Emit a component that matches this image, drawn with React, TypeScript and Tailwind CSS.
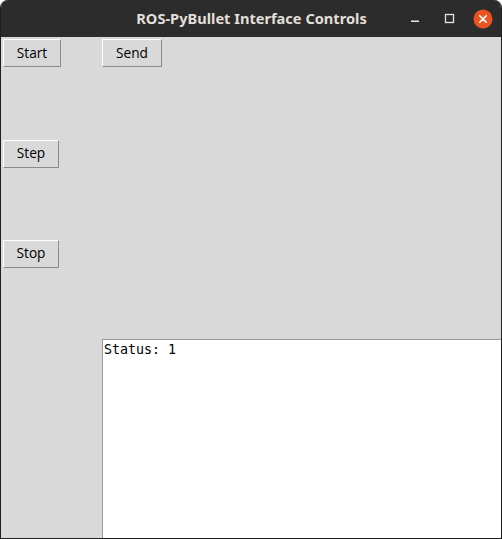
export default function App() {
  const btn =
    "h-[28px] border border-t-white border-l-white border-r-[#8a8a8a] border-b-[#8a8a8a] bg-[#d9d9d9] text-[13.7px] text-black font-['Open_Sans','DejaVu_Sans',sans-serif] leading-none flex items-center justify-center";
  return (
    <div className="w-[502px] h-[539px] bg-white">
      <div className="w-full h-full flex flex-col rounded-t-[8px] overflow-hidden border-x border-b border-[#1f1f1f] bg-[#d9d9d9]">
        <div className="h-[37px] shrink-0 bg-[#2c2c2c] relative flex items-center justify-center">
          <span className="text-[14.6px] font-bold text-[#e2dfd9] font-['Noto_Sans','DejaVu_Sans',sans-serif] ml-[1px]">
            ROS-PyBullet Interface Controls
          </span>
          <div className="absolute right-0 top-0 h-full">
            <svg width="100" height="37" viewBox="0 0 100 37">
              <rect x="10" y="20.5" width="8" height="1.5" fill="#e6e6e6" />
              <rect x="44.5" y="14.5" width="8" height="8" fill="none" stroke="#e6e6e6" strokeWidth="1.3" />
              <circle cx="82" cy="19" r="9.5" fill="#e95420" />
              <path d="M78.7 15.7 L85.3 22.3 M85.3 15.7 L78.7 22.3" stroke="#fff" strokeWidth="1.6" strokeLinecap="round" />
            </svg>
          </div>
        </div>
        <div className="flex-1 grid grid-cols-[101px_1fr] grid-rows-[100px_100px_100px_1fr]">
          <div className="pt-[2px] pl-[2px]">
            <button className={btn + " w-[58px]"}>Start</button>
          </div>
          <div className="pt-[2px]">
            <button className={btn + " w-[60px]"}>Send</button>
          </div>
          <div className="pt-[3px] pl-[2px]">
            <button className={btn + " w-[56px] h-[27px] pb-[3px]"}>Step</button>
          </div>
          <div />
          <div className="pt-[3px] pl-[2px]">
            <button className={btn + " w-[56px] h-[27px] pb-[3px]"}>Stop</button>
          </div>
          <div />
          <div />
          <div className="pt-[2px] flex">
            <div className="flex-1 bg-white border-t border-l border-[#9a9a9a] px-[1px] pt-[1px] font-['DejaVu_Sans_Mono',monospace] text-[13.3px] leading-[17px] text-black">
              Status: 1
            </div>
          </div>
        </div>
      </div>
    </div>
  );
}
